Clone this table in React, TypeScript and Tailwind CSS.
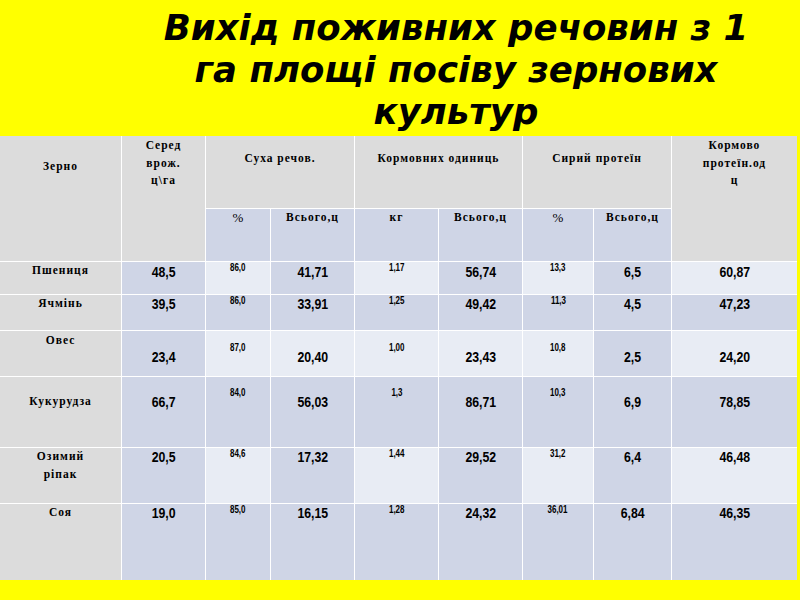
import React from "react";

const G = "bg-[#dcdcdc]";
const B = "bg-[#cfd5e6]";
const L = "bg-[#e8ecf4]";

const serif = { fontFamily: "'Liberation Serif', 'Times New Roman', serif" };
const sans = { fontFamily: "'Liberation Sans', Arial, sans-serif" };

type Row = {
  label: React.ReactNode;
  vals: string[];
  colors: string[];
  labelPt: string;
  bigPt: string;
  smallPt: string;
};

const rows: Row[] = [
  {
    label: "Пшениця",
    vals: ["48,5", "86,0", "41,71", "1,17", "56,74", "13,3", "6,5", "60,87"],
    colors: [B, L, B, L, B, L, B, L],
    labelPt: "pt-0",
    bigPt: "pt-[1px]",
    smallPt: "pt-[1px]",
  },
  {
    label: "Ячмінь",
    vals: ["39,5", "86,0", "33,91", "1,25", "49,42", "11,3", "4,5", "47,23"],
    colors: [B, B, B, B, B, B, B, B],
    labelPt: "pt-0",
    bigPt: "pt-0",
    smallPt: "pt-[1px]",
  },
  {
    label: "Овес",
    vals: ["23,4", "87,0", "20,40", "1,00", "23,43", "10,8", "2,5", "24,20"],
    colors: [B, L, L, L, L, L, B, L],
    labelPt: "pt-[1px]",
    bigPt: "pt-[17px]",
    smallPt: "pt-[12px]",
  },
  {
    label: "Кукурудза",
    vals: ["66,7", "84,0", "56,03", "1,3", "86,71", "10,3", "6,9", "78,85"],
    colors: [B, B, B, B, B, B, B, B],
    labelPt: "pt-[16px]",
    bigPt: "pt-[16px]",
    smallPt: "pt-[11px]",
  },
  {
    label: (
      <>
        Озимий
        <br />
        ріпак
      </>
    ),
    vals: ["20,5", "84,6", "17,32", "1,44", "29,52", "31,2", "6,4", "46,48"],
    colors: [B, L, B, L, B, L, B, L],
    labelPt: "pt-0",
    bigPt: "pt-0",
    smallPt: "pt-[1px]",
  },
  {
    label: "Соя",
    vals: ["19,0", "85,0", "16,15", "1,28", "24,32", "36,01", "6,84", "46,35"],
    colors: [B, B, B, B, B, B, B, B],
    labelPt: "pt-0",
    bigPt: "pt-0",
    smallPt: "pt-[1px]",
  },
];

const smallIdx = new Set([1, 3, 5]);

function HeadCell({
  children,
  className,
}: {
  children: React.ReactNode;
  className: string;
}) {
  return (
    <div
      className={`text-center text-[11.5px] font-bold leading-[17.5px] tracking-[1px] text-black ${className}`}
      style={serif}
    >
      {children}
    </div>
  );
}

export default function App() {
  return (
    <div className="flex h-[600px] w-[800px] flex-col overflow-hidden bg-[#ffff00]">
      <div className="flex h-[136px] flex-col items-center pl-[112px] pt-[7px]">
        <h1
          className="text-center text-[35.5px] font-bold italic leading-[42px] text-black"
          style={{ fontFamily: "'DejaVu Sans', 'Verdana', sans-serif" }}
        >
          Вихід поживних речовин з 1
          <br />
          га площі посіву зернових
          <br />
          культур
        </h1>
      </div>

      <div className="flex">
        <div className="grid w-[797px] grid-cols-[121px_83px_64px_83px_83px_83px_70px_77px_125px] grid-rows-[72px_52px_32px_35px_45px_70px_55px_76px] gap-px bg-white">
          <HeadCell className={`${G} row-span-2 pt-[22px]`}>Зерно</HeadCell>
          <HeadCell className={`${G} row-span-2 pt-[1px]`}>
            Серед
            <br />
            врож.
            <br />
            ц\га
          </HeadCell>
          <HeadCell className={`${G} col-span-2 pt-[14px]`}>Суха речов.</HeadCell>
          <HeadCell className={`${G} col-span-2 pt-[14px]`}>Кормовних одиниць</HeadCell>
          <HeadCell className={`${G} col-span-2 pt-[14px]`}>Сирий протеїн</HeadCell>
          <HeadCell className={`${G} row-span-2 pt-[1px]`}>
            Кормово
            <br />
            протеїн.од
            <br />
            ц
          </HeadCell>

          <HeadCell className={`${B} pt-0 !text-[13px] !font-normal !tracking-normal`}>%</HeadCell>
          <HeadCell className={`${B} pt-0`}>Всього,ц</HeadCell>
          <HeadCell className={`${B} pt-0`}>кг</HeadCell>
          <HeadCell className={`${B} pt-0`}>Всього,ц</HeadCell>
          <HeadCell className={`${B} pt-0 !text-[13px] !font-normal !tracking-normal`}>%</HeadCell>
          <HeadCell className={`${B} pt-0`}>Всього,ц</HeadCell>

          {rows.map((r, ri) => (
            <React.Fragment key={ri}>
              <HeadCell className={`${G} ${r.labelPt}`}>{r.label}</HeadCell>
              {r.vals.map((v, vi) =>
                smallIdx.has(vi) ? (
                  <div
                    key={vi}
                    className={`${r.colors[vi]} ${r.smallPt} text-center text-[10px] font-bold leading-[10px] text-black`}
                    style={sans}
                  >
                    <span className="inline-block origin-center scale-x-[0.8]">{v}</span>
                  </div>
                ) : (
                  <div
                    key={vi}
                    className={`${r.colors[vi]} ${r.bigPt} text-center text-[15px] font-bold leading-[18px] text-black`}
                    style={sans}
                  >
                    <span className="inline-block origin-center scale-x-[0.82]">{v}</span>
                  </div>
                )
              )}
            </React.Fragment>
          ))}
        </div>
      </div>
    </div>
  );
}
